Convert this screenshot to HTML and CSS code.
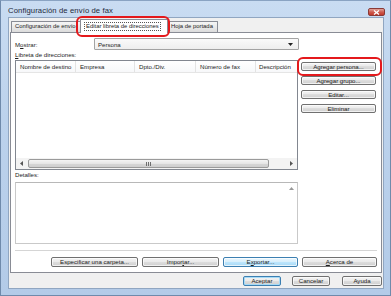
FILE: index.html
```html
<!DOCTYPE html>
<html>
<head>
<meta charset="utf-8">
<link rel="stylesheet" href="styles.css">
</head>
<body>
<div class="window">
  <div class="titlebar">
    <span class="title">Configuración de envío de fax</span>
    <span class="close"><svg width="7" height="5" viewBox="0 0 7 5"><path d="M1 0.5 L6 4.5 M6 0.5 L1 4.5" stroke="#fff" stroke-width="1.3"/></svg></span>
  </div>
  <div class="client">
    <div class="tabs">
      <div class="tab t1">Configuración de envío</div>
      <div class="tab t2 active"><span class="focus">Editar libreta de direcciones</span></div>
      <div class="tab t3">Hoja de portada</div>
    </div>
    <div class="panel">
      <div class="row-show">
        <span class="show-label">M<u>o</u>strar:</span>
        <div class="combo"><span>Persona</span><svg class="combo-arrow" width="5" height="3" viewBox="0 0 5 3"><path d="M0 0 H5 L2.5 3 Z" fill="#222"/></svg></div>
      </div>
      <div class="lbl"><u>L</u>ibreta de direcciones:</div>
      <div class="main">
        <div class="list">
          <div class="lhead">
            <div class="col c1">Nombre de destino</div>
            <div class="col c2">Empresa</div>
            <div class="col c3">Dpto./Div.</div>
            <div class="col c4">Número de fax</div>
            <div class="col c5">Descripción</div>
          </div>
          <div class="lbody"></div>
          <div class="hscroll">
            <div class="sarrow"><svg width="3" height="5" viewBox="0 0 3 5"><path d="M3 0 V5 L0 2.5 Z" fill="#555"/></svg></div>
            <div class="track">
              <div class="thumb"><span class="grip"></span><span class="grip"></span><span class="grip"></span></div>
            </div>
            <div class="sarrow"><svg width="3" height="5" viewBox="0 0 3 5"><path d="M0 0 V5 L3 2.5 Z" fill="#555"/></svg></div>
          </div>
        </div>
        <div class="side">
          <div class="btn">Agregar perso<u>n</u>a...</div>
          <div class="btn">Ag<u>r</u>egar grupo...</div>
          <div class="btn">E<u>d</u>itar...</div>
          <div class="btn"><u>E</u>liminar</div>
        </div>
      </div>
      <div class="lbl lbl-det">Detalles:</div>
      <div class="details">
        <div class="vscroll"><svg width="5" height="3" viewBox="0 0 5 3"><path d="M0 3 H5 L2.5 0 Z" fill="#999"/></svg></div>
      </div>
      <div class="sep"></div>
      <div class="actions">
        <div class="btn b-spec">Especificar una carpeta...</div>
        <div class="btn b-imp">Impor<u>t</u>ar...</div>
        <div class="btn b-exp hot">E<u>x</u>portar...</div>
        <div class="btn b-acc"><u>A</u>cerca de</div>
      </div>
    </div>
    <div class="footer">
      <div class="btn b-ok default">Aceptar</div>
      <div class="btn b-cancel">Cancelar</div>
      <div class="btn b-help">Ayuda</div>
    </div>
  </div>
  <div class="ring ring-tab"></div>
  <div class="ring ring-btn"></div>
</div>
</body>
</html>
```

FILE: styles.css
```css
* { box-sizing: border-box; }
html, body { margin: 0; padding: 0; }
body {
  width: 391px;
  height: 296px;
  overflow: hidden;
  font-family: "Liberation Sans", Arial, sans-serif;
  font-size: 6.1px;
  color: #1c1c1c;
}
u { text-decoration: underline; text-underline-offset: 1px; }

.window {
  position: relative;
  width: 391px;
  height: 296px;
  padding: 0 6px 6px 7px;
  display: flex;
  flex-direction: column;
  background: linear-gradient(180deg, #c9dcf2 0%, #bcd2ec 40%, #b3cbe8 100%);
  border: 1px solid #6f8aab;
  border-top-color: #8aa3c2;
}

.titlebar {
  height: 16px;
  display: flex;
  align-items: flex-start;
  justify-content: space-between;
  flex: none;
}
.title {
  font-size: 7.7px;
  color: #1e2a3a;
  margin-top: 5px;
  margin-left: 0px;
  letter-spacing: 0.1px;
}
.close {
  width: 17px;
  height: 8px;
  margin-top: 7px;
  margin-right: -1px;
  background: linear-gradient(180deg, #e0a49a 0%, #cf5c50 50%, #c0392b 100%);
  border: 1px solid #8a3a36;
  border-radius: 2px;
  display: flex;
  align-items: center;
  justify-content: center;
}

.client {
  flex: 1;
  background: #f0f0f0;
  border: 1px solid #90a6c1;
  padding: 1px 0 0 1px;
  display: flex;
  flex-direction: column;
}

.tabs {
  height: 13px;
  display: flex;
  align-items: flex-end;
  padding-left: 1px;
  position: relative;
  z-index: 2;
  flex: none;
}
.tab {
  height: 11px;
  border: 1px solid #898c95;
  border-bottom: none;
  background: linear-gradient(180deg, #f6f6f6 0%, #e9e9e9 50%, #dcdcdc 100%);
  line-height: 9px;
  padding-left: 3px;
  white-space: nowrap;
  overflow: hidden;
  border-radius: 1px 1px 0 0;
  font-size: 5.9px;
}
.t1 { width: 71px; }
.t2 {
  width: 88px;
  height: 14px;
  margin: 0 -1px -1px -2px;
  background: #fff;
  position: relative;
  z-index: 3;
  padding: 2px 0 0 3px;
  line-height: 8px;
}
.t2 .focus {
  display: inline-block;
  border: 1px dotted #555;
  padding: 0 1px;
  line-height: 7px;
}
.t3 { width: 51px; padding-left: 3px; }

.panel {
  width: 372px;
  height: 241px;
  flex: none;
  background: #fff;
  border: 1px solid #898c95;
  padding: 5px 4px 0 4px;
  display: flex;
  flex-direction: column;
  position: relative;
  z-index: 1;
}

.row-show {
  height: 12px;
  display: flex;
  align-items: center;
  flex: none;
}
.show-label { width: 79px; }
.combo {
  width: 205px;
  height: 12px;
  border: 1px solid #a3a3a3;
  border-radius: 1px;
  background: linear-gradient(180deg, #fafafa, #eeeeee);
  display: flex;
  align-items: center;
  justify-content: space-between;
  padding: 0 5px 0 3px;
}
.combo-arrow { display: block; }

.lbl {
  height: 10px;
  line-height: 10px;
  flex: none;
}
.lbl-det { height: 12px; line-height: 9px; }

.main {
  display: flex;
  gap: 3px;
  flex: none;
}
.list {
  width: 283px;
  height: 110px;
  border: 1px solid #828790;
  display: flex;
  flex-direction: column;
}
.lhead {
  height: 12px;
  display: flex;
  background: linear-gradient(180deg, #ffffff, #f7f8fa);
  border-bottom: 1px solid #e5e5e5;
  flex: none;
  overflow: hidden;
}
.col {
  border-right: 1px solid #e3e3e3;
  padding-left: 4px;
  line-height: 11px;
  white-space: nowrap;
  overflow: hidden;
  flex: none;
}
.c1 { width: 60px; }
.c2 { width: 59px; }
.c3 { width: 61px; }
.c4 { width: 60px; }
.c5 { width: 44px; border-right: none; padding-left: 3px; }
.lbody { flex: 1; }
.hscroll {
  height: 11px;
  display: flex;
  background: #f3f3f3;
  flex: none;
}
.sarrow {
  width: 11px;
  display: flex;
  align-items: center;
  justify-content: center;
  flex: none;
}
.sarrow svg { display: block; }
.track {
  flex: 1;
  padding: 1px 17px 1px 1px;
}
.thumb {
  height: 9px;
  border: 1px solid #9a9a9a;
  border-radius: 2px;
  background: linear-gradient(180deg, #f4f4f4 0%, #e6e6e6 50%, #d6d6d6 51%, #cfcfcf 100%);
  display: flex;
  align-items: center;
  justify-content: center;
  gap: 1px;
}
.grip {
  width: 1px;
  height: 4px;
  background: #6e6e6e;
}

.side {
  width: 76px;
  padding-top: 2px;
  display: flex;
  flex-direction: column;
  gap: 5px;
}

.btn {
  height: 9px;
  border: 1px solid #707070;
  border-radius: 2px;
  background: linear-gradient(180deg, #f3f3f3 0%, #ebebeb 45%, #dddddd 50%, #cfcfcf 100%);
  box-shadow: inset 0 0 0 1px rgba(255,255,255,0.7);
  text-align: center;
  line-height: 7px;
  white-space: nowrap;
  overflow: hidden;
  flex: none;
}
.side .btn { width: 75px; }

.details {
  height: 62px;
  border: 1px solid #c9c9c9;
  border-top-color: #b8b8b8;
  width: 283px;
  display: flex;
  justify-content: flex-end;
  flex: none;
}
.vscroll {
  width: 11px;
  display: flex;
  justify-content: center;
  padding-top: 4px;
}
.vscroll svg { display: block; }

.sep {
  margin-top: 6px;
  height: 2px;
  border-top: 1px solid #d5d5d5;
  border-bottom: 1px solid #ffffff;
  flex: none;
}
.actions {
  margin-top: 5px;
  display: flex;
  justify-content: flex-end;
  gap: 4px;
  flex: none;
}
.actions .btn { height: 10px; line-height: 8px; }
.b-spec { width: 87px; }
.b-imp { width: 77px; }
.b-exp { width: 75px; }
.b-acc { width: 75px; }
.hot {
  border-color: #3c7fb1;
  background: linear-gradient(180deg, #eaf6fd 0%, #d9f0fc 45%, #bee6fd 50%, #a7d9f5 100%);
}

.footer {
  flex: 1;
  display: flex;
  justify-content: flex-end;
  align-items: flex-start;
  padding: 3px 1px 0 0;
}
.footer .btn { height: 10px; line-height: 8px; }
.b-ok { width: 38px; margin-right: 11px; }
.b-cancel { width: 38px; margin-right: 12px; }
.b-help { width: 40px; }
.default {
  border-color: #3c7fb1;
  box-shadow: inset 0 0 0 1px #a6dbf7;
}

.ring {
  position: absolute;
  border: 2px solid #e4191c;
  border-radius: 6px;
  z-index: 10;
}
.ring-tab { left: 75px; top: 15px; width: 94px; height: 21px; }
.ring-btn { left: 296px; top: 56px; width: 85px; height: 19px; }
```
